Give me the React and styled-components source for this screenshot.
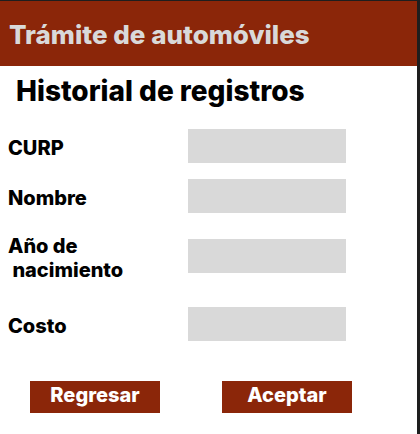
import React from 'react'
import styled, { createGlobalStyle } from 'styled-components'

const GlobalStyle = createGlobalStyle`
  html, body {
    margin: 0;
    padding: 0;
    background: #1e1e1e;
  }
  body {
    font-family: Inter, "Noto Sans", "Liberation Sans", sans-serif;
  }
`

export default function App() {
  return (
    <>
      <GlobalStyle />
      <Screen>
        <Header>
          <HeaderTitle>Trámite de automóviles</HeaderTitle>
        </Header>
        <PageTitle>Historial de registros</PageTitle>
        <Form>
          <Row $top={22}>
            <Label>CURP</Label>
            <Field />
          </Row>
          <Row $top={16}>
            <Label>Nombre</Label>
            <Field />
          </Row>
          <Row $top={17}>
            <Label>
              Año de
              <br />
              &nbsp;nacimiento
            </Label>
            <Field />
          </Row>
          <Row $top={25}>
            <Label>Costo</Label>
            <Field />
          </Row>
        </Form>
        <Actions>
          <Button type="button">Regresar</Button>
          <Button type="button">Aceptar</Button>
        </Actions>
      </Screen>
    </>
  )
}

const Screen = styled.div`
  width: 417px;
  height: 433px;
  margin-top: 1px;
  background: #ffffff;
  display: flex;
  flex-direction: column;
  overflow: hidden;
`

const Header = styled.header`
  height: 65px;
  background: #8b2609;
  display: flex;
  align-items: center;
  padding: 2px 0 0 9px;
  box-sizing: border-box;
`

const HeaderTitle = styled.h1`
  margin: 0;
  font-size: 26px;
  font-weight: 800;
  color: #d9d9d9;
  line-height: 1;
`

const PageTitle = styled.h2`
  margin: 9px 0 0 16px;
  font-size: 28px;
  font-weight: 800;
  color: #000;
  line-height: 32px;
`

const Form = styled.div`
  display: flex;
  flex-direction: column;
  padding-left: 8px;
`

const Row = styled.div`
  display: grid;
  grid-template-columns: 180px 158px;
  align-items: center;
  margin-top: ${(p) => p.$top}px;
`

const Label = styled.label`
  padding-top: 4px;
  font-size: 20px;
  font-weight: 800;
  color: #000;
  line-height: 24px;
  white-space: nowrap;
`

const Field = styled.div`
  height: 34px;
  background: #d9d9d9;
`

const Actions = styled.div`
  display: flex;
  gap: 62px;
  padding-left: 30px;
  margin-top: 40px;
`

const Button = styled.button`
  width: 130px;
  height: 32px;
  border: none;
  padding: 0 0 5px;
  background: #8b2609;
  color: #fff;
  font-family: inherit;
  font-size: 20px;
  font-weight: 800;
  cursor: pointer;
`
